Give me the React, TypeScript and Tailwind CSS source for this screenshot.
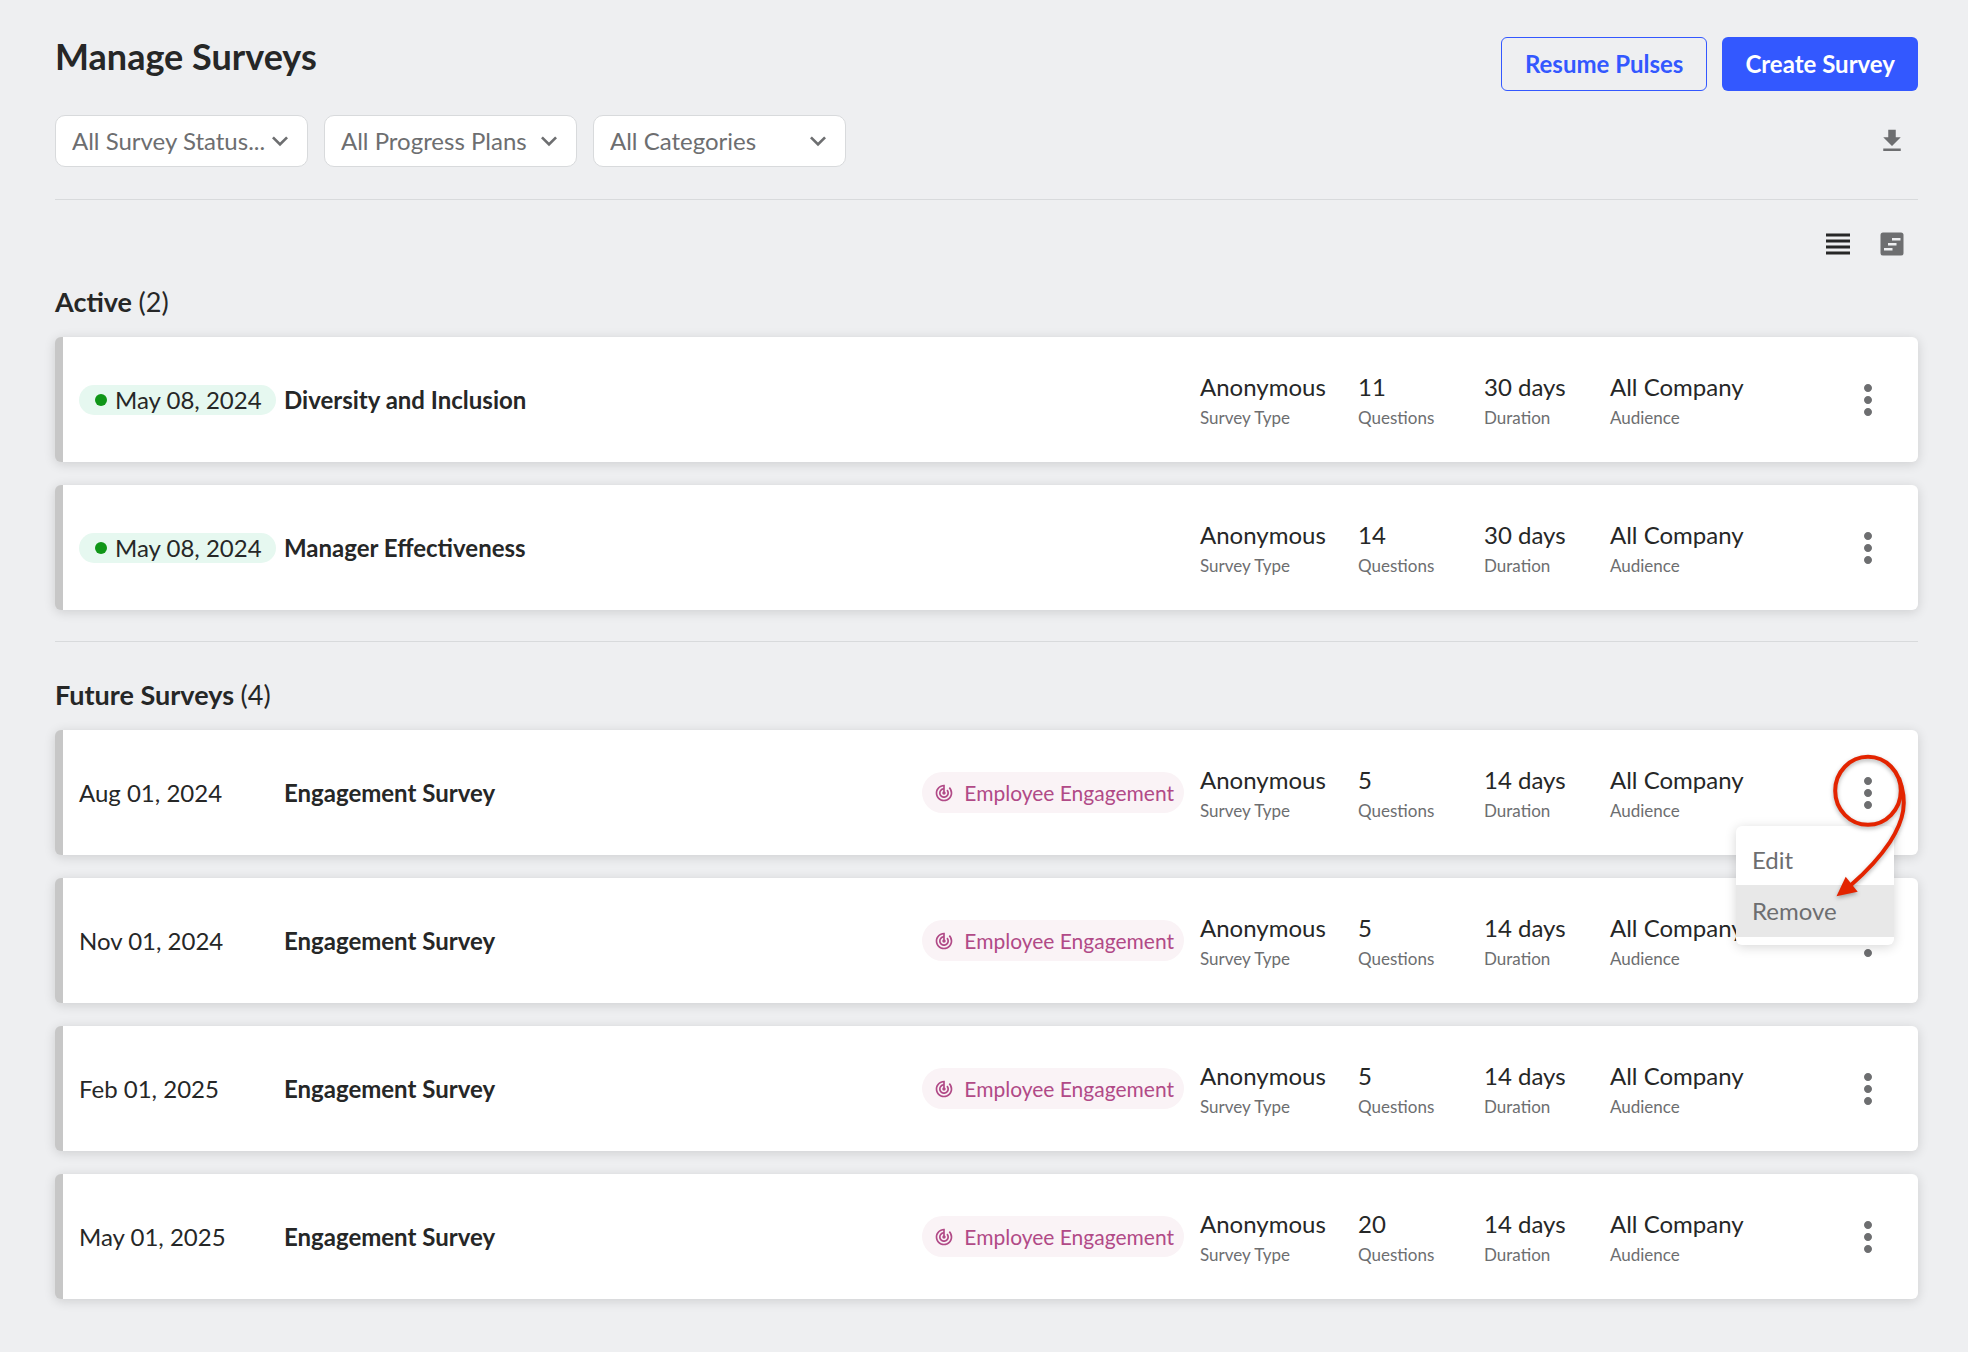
import React from 'react';
import {
  MdExpandMore,
  MdFileDownload,
  MdMoreVert,
  MdTrackChanges,
  MdViewHeadline,
} from 'react-icons/md';

interface Survey {
  date: string;
  name: string;
  category?: string;
  type: string;
  questions: number;
  duration: string;
  audience: string;
  active?: boolean;
  menuOpen?: boolean;
}

const activeSurveys: Survey[] = [
  { date: 'May 08, 2024', name: 'Diversity and Inclusion', type: 'Anonymous', questions: 11, duration: '30 days', audience: 'All Company', active: true },
  { date: 'May 08, 2024', name: 'Manager Effectiveness', type: 'Anonymous', questions: 14, duration: '30 days', audience: 'All Company', active: true },
];

const futureSurveys: Survey[] = [
  { date: 'Aug 01, 2024', name: 'Engagement Survey', category: 'Employee Engagement', type: 'Anonymous', questions: 5, duration: '14 days', audience: 'All Company', menuOpen: true },
  { date: 'Nov 01, 2024', name: 'Engagement Survey', category: 'Employee Engagement', type: 'Anonymous', questions: 5, duration: '14 days', audience: 'All Company' },
  { date: 'Feb 01, 2025', name: 'Engagement Survey', category: 'Employee Engagement', type: 'Anonymous', questions: 5, duration: '14 days', audience: 'All Company' },
  { date: 'May 01, 2025', name: 'Engagement Survey', category: 'Employee Engagement', type: 'Anonymous', questions: 20, duration: '14 days', audience: 'All Company' },
];

const FilterSelect: React.FC<{ label: string; value: string }> = ({ label, value }) => (
  <div className="relative w-[253px]">
    <select
      aria-label={label}
      className="h-[52px] w-full appearance-none rounded-[10px] border border-[#d8dadc] bg-white pl-4 text-2xl text-[#6d6e70]"
    >
      <option>{value}</option>
    </select>
    <MdExpandMore className="pointer-events-none absolute top-[10px] right-3 size-8 text-[#6d6e70]" />
  </div>
);

const TimelineIcon = () => (
  <svg viewBox="0 0 24 24" className="size-6" aria-hidden="true">
    <rect x="0.5" y="0.5" width="23" height="23" rx="2.5" fill="#6d6e70" />
    <path d="M12 6h8.5v2.4H12zM8 11h8.5v2.4H8zM4 16h8.5v2.4H4z" fill="#eeeff1" />
  </svg>
);

const Detail: React.FC<{ value: string | number; label: string }> = ({ value, label }) => (
  <div className="flex flex-col">
    <span className="text-2xl leading-8">{value}</span>
    <span className="text-[17px] leading-[30px] text-[#6d6e70]">{label}</span>
  </div>
);

const RowMenu = () => (
  <div
    role="menu"
    className="absolute top-24 right-6 z-10 flex w-[158px] flex-col rounded-md bg-white pt-2 pb-2 text-2xl text-[#6d6e70] shadow-[0_2px_12px_rgba(0,0,0,0.16)]"
  >
    <button role="menuitem" className="h-[51px] pl-4 text-left">Edit</button>
    <button role="menuitem" className="h-[52px] bg-[#e8e8e8] pl-4 text-left">Remove</button>
  </div>
);

// Circle round the options button, with an arrow down to "Remove"
const MenuCallout = () => (
  <svg
    viewBox="0 0 90 160"
    className="pointer-events-none absolute top-5 right-0 z-20 h-[160px] w-[90px] drop-shadow-[0_2px_2px_rgba(0,0,0,0.3)]"
    aria-hidden="true"
  >
    <g fill="none" stroke="#e32400" strokeWidth="4">
      <ellipse cx="40" cy="40.8" rx="32.8" ry="34" />
      <path d="M71 28C80 52 76 70 62 92C52 107 38 122 23 135" />
    </g>
    <path d="M8.5 146.2L17.7 126.7L29.7 141.7Z" fill="#e32400" />
  </svg>
);

const SurveyCard: React.FC<{ survey: Survey }> = ({ survey }) => (
  <li className="relative flex h-[125px] items-center rounded-md border-l-8 border-[#c7c7c7] bg-white pl-4 shadow-[0_2px_12px_rgba(0,0,0,0.14)]">
    <div className="w-[205px] shrink-0 text-2xl">
      {survey.active ? (
        <span className="flex h-[30px] w-fit items-center gap-2 rounded-full bg-[#e6f8f0] pr-[14px] pl-4">
          <span className="size-3 rounded-full bg-[#109618]" />
          {survey.date}
        </span>
      ) : (
        survey.date
      )}
    </div>
    <h3 className="flex-1 text-2xl font-bold">{survey.name}</h3>
    {survey.category && (
      <span className="mr-4 flex h-[41px] items-center gap-[10px] rounded-full bg-[#faf3f6] pr-[10px] pl-3 text-[21px] text-[#b14a87]">
        <MdTrackChanges className="size-5" />
        {survey.category}
      </span>
    )}
    <div className="grid shrink-0 grid-cols-[158px_126px_126px_234px] pt-1">
      <Detail value={survey.type} label="Survey Type" />
      <Detail value={survey.questions} label="Questions" />
      <Detail value={survey.duration} label="Duration" />
      <Detail value={survey.audience} label="Audience" />
    </div>
    <button aria-label="Survey options" className="mr-[26px] shrink-0 text-[#6d6e70]">
      <MdMoreVert className="size-12" />
    </button>
    {survey.menuOpen && (
      <>
        <RowMenu />
        <MenuCallout />
      </>
    )}
  </li>
);

const SurveySection: React.FC<{ title: string; surveys: Survey[] }> = ({ title, surveys }) => (
  <section>
    <h2 className="text-[27px] leading-9 font-bold">
      {title} <span className="font-normal">({surveys.length})</span>
    </h2>
    <ul className="mt-[17px] flex flex-col gap-[23px]">
      {surveys.map((survey) => (
        <SurveyCard key={survey.date + survey.name} survey={survey} />
      ))}
    </ul>
  </section>
);

const App = () => (
  <main className="min-h-screen bg-[#eeeff1] pt-9 pr-[50px] pb-12 pl-[55px] font-[Lato,sans-serif] text-[#262727]">
    <header className="flex items-start justify-between">
      <h1 className="text-4xl leading-10 font-bold">Manage Surveys</h1>
      <div className="flex gap-[15px] pt-px text-2xl font-bold">
        <button className="h-[54px] rounded-md border border-[#3358ff] px-[23px] text-[#3358ff]">Resume Pulses</button>
        <button className="h-[54px] rounded-md bg-[#3358ff] px-[23px] text-white">Create Survey</button>
      </div>
    </header>

    <div className="mt-6 flex items-center justify-between border-b border-[#d8dadc] pb-8">
      <div className="flex gap-4">
        <FilterSelect label="Survey status" value="All Survey Status..." />
        <FilterSelect label="Progress plan" value="All Progress Plans" />
        <FilterSelect label="Category" value="All Categories" />
      </div>
      <button aria-label="Download" className="mr-[11px] text-[#6d6e70]">
        <MdFileDownload className="size-[30px]" />
      </button>
    </div>

    <div className="mt-[26px] mr-[14px] flex items-center justify-end gap-6">
      <button aria-label="List view">
        <MdViewHeadline className="size-9" />
      </button>
      <button aria-label="Timeline view">
        <TimelineIcon />
      </button>
    </div>

    <div className="mt-[22px]">
      <SurveySection title="Active" surveys={activeSurveys} />
    </div>
    <hr className="mt-[31px] mb-[35px] border-[#d8dadc]" />
    <SurveySection title="Future Surveys" surveys={futureSurveys} />
  </main>
);

export default App;
